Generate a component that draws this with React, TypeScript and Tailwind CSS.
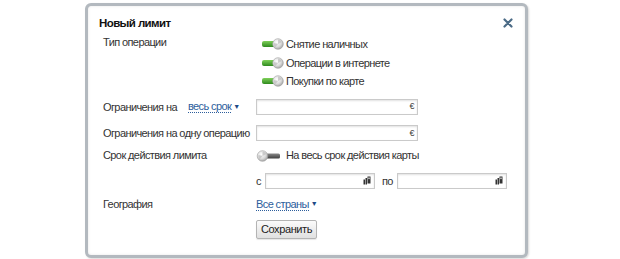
import React from "react";

const Toggle = ({ on }: { on: boolean }) => (
  <svg width="30" height="12" viewBox="0 0 30 12" className="shrink-0">
    <defs>
      <linearGradient id={on ? "gOn" : "gOff"} x1="0" y1="0" x2="0" y2="1">
        <stop offset="0" stopColor={on ? "#7fd05a" : "#8a8a8a"} />
        <stop offset="1" stopColor={on ? "#2f8a1e" : "#3f3f3f"} />
      </linearGradient>
      <radialGradient id="knob" cx="0.4" cy="0.35" r="0.7">
        <stop offset="0" stopColor="#ffffff" />
        <stop offset="0.6" stopColor="#d9d9d9" />
        <stop offset="1" stopColor="#9c9c9c" />
      </radialGradient>
    </defs>
    {on ? (
      <>
        <rect x="6" y="3" width="13" height="6" rx="2" fill="url(#gOn)" />
        <circle cx="22" cy="6" r="5.3" fill="url(#knob)" stroke="#a0a0a0" strokeWidth="0.6" />
        <path d="M22 6 L22 1.5 A4.5 4.5 0 0 1 26 4 Z M22 6 L19 9.5 A4.5 4.5 0 0 1 18 5 Z" fill="#bdbdbd" opacity="0.7" />
      </>
    ) : (
      <>
        <rect x="10" y="3.5" width="14" height="5" rx="1.5" fill="url(#gOff)" />
        <circle cx="6.5" cy="6" r="5.3" fill="url(#knob)" stroke="#a0a0a0" strokeWidth="0.6" />
        <path d="M6.5 6 L6.5 1.5 A4.5 4.5 0 0 1 10.5 4 Z M6.5 6 L3.5 9.5 A4.5 4.5 0 0 1 2.5 5 Z" fill="#bdbdbd" opacity="0.7" />
      </>
    )}
  </svg>
);

// календарь в полях дат
const CalIcon = () => (
  <svg width="8" height="9" viewBox="0 0 8 9">
    <rect x="0.5" y="3.5" width="1.5" height="5" fill="#333" />
    <rect x="2.5" y="2" width="1.5" height="6.5" fill="#333" />
    <rect x="4.5" y="0.5" width="3" height="7" fill="#333" />
    <rect x="5.3" y="1.5" width="1.4" height="1.6" fill="#ddd" />
  </svg>
);

const Field = ({ w, euro }: { w: string; euro?: boolean }) => (
  <div className={`${w} h-[16px] border border-[#cacaca] bg-white shadow-[inset_0_1px_2px_rgba(0,0,0,0.12)] flex items-center justify-end pr-[3px]`}>
    {euro ? <span className="text-[9px] leading-none text-[#444]">€</span> : <CalIcon />}
  </div>
);

const Link = ({ children }: { children: React.ReactNode }) => (
  <span className="inline-flex items-center gap-[2px]">
    <span className="text-[#2d5e9c] border-b border-dotted border-[#2d5e9c] leading-[12px]">{children}</span>
    <span className="text-[7px] text-[#1d4a86]">▼</span>
  </span>
);

const ops = ["Снятие наличных", "Операции в интернете", "Покупки по карте"];

export default function App() {
  return (
    <div className="w-[620px] h-[259px] bg-white overflow-hidden font-['Liberation_Sans',Arial,sans-serif] text-[11px] tracking-[-0.6px] text-[#333]">
      <div className="pl-[85px] pt-[3px]">
        <div className="w-[443px] h-[255px] rounded-[6px] border-[3px] border-[#b3b9bf] bg-white shadow-[inset_0_0_3px_rgba(0,0,0,0.1),1px_1px_2px_rgba(0,0,0,0.15)]">
          <div className="flex justify-between items-center pl-[11px] pr-[12px] pt-[10px] mb-[5px]">
            <span className="font-bold text-[11.5px] leading-[14px] text-[#111]">Новый лимит</span>
            <svg width="10" height="10" viewBox="0 0 10 10">
              <path d="M1.5 1.5 L8.5 8.5 M8.5 1.5 L1.5 8.5" stroke="#4b6b86" strokeWidth="2.2" strokeLinecap="round" />
            </svg>
          </div>

          <div className="pl-[15px] flex flex-col">
            <div className="flex">
              <div className="w-[153px] leading-[14px]">Тип операции</div>
              <div className="flex flex-col">
                {ops.map((o) => (
                  <div key={o} className="h-[18.5px] flex items-center">
                    <Toggle on />
                    <span>{o}</span>
                  </div>
                ))}
              </div>
            </div>

            <div className="flex items-center mt-[8px]">
              <div className="w-[153px] flex items-center gap-[11px]">
                <span>Ограничения на</span>
                <Link>весь срок</Link>
              </div>
              <Field w="w-[162px]" euro />
            </div>

            <div className="flex items-center mt-[10px]">
              <div className="w-[153px] whitespace-nowrap">Ограничения на одну операцию</div>
              <Field w="w-[162px]" euro />
            </div>

            <div className="flex items-center h-[18px] mt-[5px]">
              <div className="w-[153px]">Срок действия лимита</div>
              <Toggle on={false} />
              <span>На весь срок действия карты</span>
            </div>

            <div className="flex items-center mt-[8px] pl-[153px]">
              <span className="w-[9px]">с</span>
              <Field w="w-[110px]" />
              <span className="ml-[7px] w-[15px]">по</span>
              <Field w="w-[110px]" />
            </div>

            <div className="flex items-center h-[16px] mt-[7px]">
              <div className="w-[153px]">География</div>
              <Link>Все страны</Link>
            </div>

            <div className="pl-[153px] mt-[8px]">
              <button className="h-[19px] w-[61px] border border-[#b4b4b4] rounded-[2px] bg-gradient-to-b from-[#fbfbfb] to-[#e0e0e0] text-[11px] tracking-[-0.4px] text-[#222] shadow-[0_1px_1px_rgba(0,0,0,0.1)]">
                Сохранить
              </button>
            </div>
          </div>
        </div>
      </div>
    </div>
  );
}
